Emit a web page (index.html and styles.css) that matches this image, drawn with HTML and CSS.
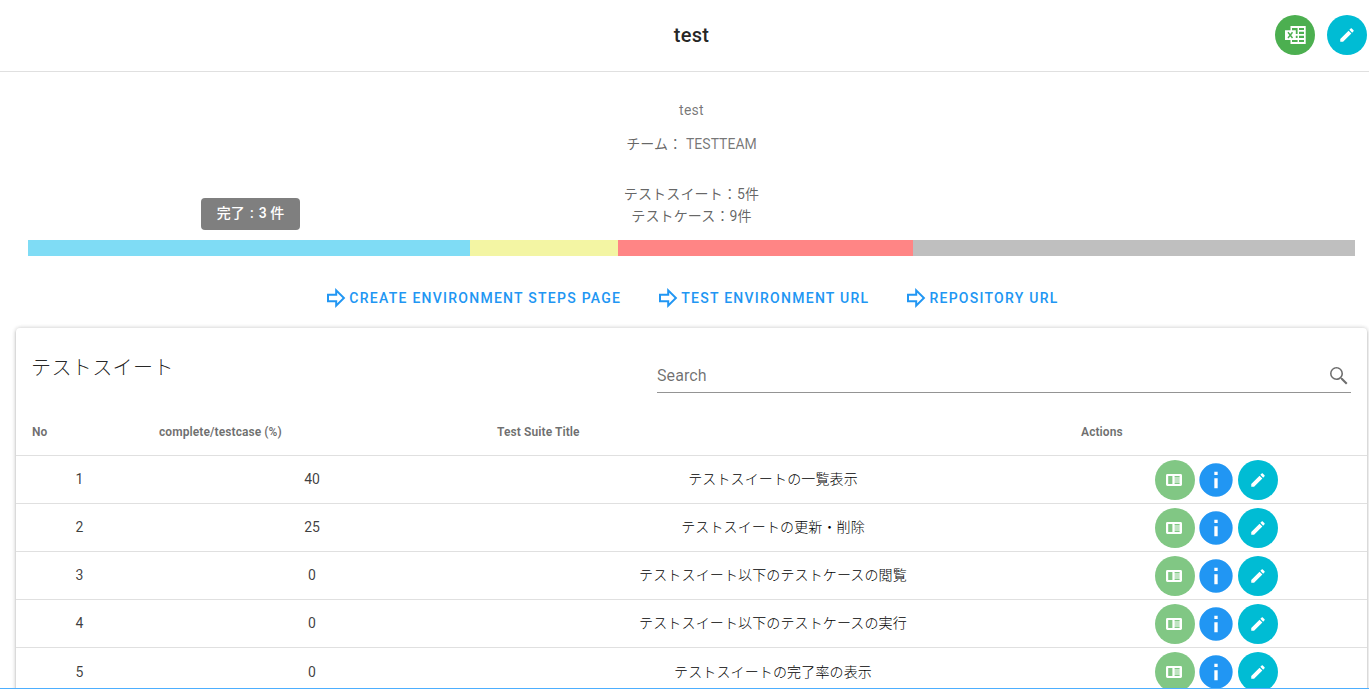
FILE: index.html
```
<!DOCTYPE html>
<html lang="ja">
<head>
<meta charset="utf-8">
<title>test</title>
<link rel="stylesheet" href="styles.css">
</head>
<body>
<svg class="defs" width="0" height="0">
  <symbol id="pencil" viewBox="0 0 24 24"><path d="M20.71,7.04C21.1,6.65 21.1,6 20.71,5.63L18.37,3.29C18,2.9 17.35,2.9 16.96,3.29L15.12,5.12L18.87,8.87M3,17.25V21H6.75L17.81,9.93L14.06,6.18L3,17.25Z"/></symbol>
  <symbol id="info" viewBox="0 0 24 24"><path d="M13,9H11V7H13M13,17H11V11H13M12,2A10,10 0 0,0 2,12A10,10 0 0,0 12,22A10,10 0 0,0 22,12A10,10 0 0,0 12,2Z"/></symbol>
  <symbol id="reader" viewBox="0 0 16 12"><path fill-rule="evenodd" d="M1.4,0H14.6A1.4,1.4 0 0,1 16,1.4V10.6A1.4,1.4 0 0,1 14.6,12H1.4A1.4,1.4 0 0,1 0,10.6V1.4A1.4,1.4 0 0,1 1.4,0ZM2.2,2V10H6.4V2ZM8.6,2V3.6H13.6V2ZM8.6,4.6V5.5H13.6V4.6ZM8.6,6.6V7.5H13.6V6.6ZM8.6,8.5V10H13.6V8.5Z"/></symbol>
  <symbol id="arrow" viewBox="0 0 19 20"><path fill-rule="evenodd" d="M0,5.8H8.2V0L18.3,10L8.2,20V14.2H0ZM2,7.8V12.2H10.2V15.2L15.5,10L10.2,4.8V7.8Z"/></symbol>
</svg>
<div class="page">
  <header class="header">
    <h1 class="header-title">test</h1>
    <div class="header-actions">
      <span class="fab excel"><svg width="21" height="18" viewBox="0 0 21 18"><path fill-rule="evenodd" d="M5.5,0H20.7V18H5.5V14H0V4.3H5.5ZM7,2V4.3H10.8V5.7H12.6V2ZM14,2V4H19V2ZM14,5.7V7.9H19V5.7ZM14,9.8V12H19V9.8ZM14,13.9V16H19V13.9ZM10.8,5.7V7.9H12.6V5.7ZM10.8,9.8V12H12.6V9.8ZM7,14V16H12.6V13.9Z"/><path class="excel-mark" d="M3,6.2L7.5,12M7.5,6.2L3,12"/></svg></span>
      <span class="fab cyan"><svg width="18" height="18"><use href="#pencil"/></svg></span>
    </div>
  </header>
  <main class="content">
    <section class="summary">
      <p class="desc">test</p>
      <p class="team">チーム： <span class="latin">TESTTEAM</span></p>
      <p class="count">テストスイート：5件</p>
      <p class="count">テストケース：9件</p>
    </section>
    <div class="progress">
      <div class="seg done"><div class="tooltip">完了<span class="colon">:</span>3 件</div></div>
      <div class="seg yellow"></div>
      <div class="seg red"></div>
      <div class="seg gray"></div>
    </div>
    <nav class="links">
      <a class="link"><svg width="19" height="20"><use href="#arrow"/></svg>CREATE ENVIRONMENT STEPS PAGE</a>
      <a class="link"><svg width="19" height="20"><use href="#arrow"/></svg>TEST ENVIRONMENT URL</a>
      <a class="link"><svg width="19" height="20"><use href="#arrow"/></svg>REPOSITORY URL</a>
    </nav>
    <section class="card">
      <div class="card-head">
        <h2 class="card-title">テストスイート</h2>
        <div class="search"><span>Search</span><svg width="24" height="24" viewBox="0 0 24 24"><path d="M9.5,3A6.5,6.5 0 0,1 16,9.5C16,11.11 15.41,12.59 14.44,13.73L14.71,14H15.5L20.5,19L19,20.5L14,15.5V14.71L13.73,14.44C12.59,15.41 11.11,16 9.5,16A6.5,6.5 0 0,1 3,9.5A6.5,6.5 0 0,1 9.5,3M9.5,4.6C6.8,4.6 4.6,6.8 4.6,9.5C4.6,12.2 6.8,14.4 9.5,14.4C12.2,14.4 14.4,12.2 14.4,9.5C14.4,6.8 12.2,4.6 9.5,4.6Z"/></svg></div>
      </div>
      <div class="row head"><span>No</span><span>complete/testcase (%)</span><span>Test Suite Title</span><span>Actions</span></div>
      <div class="row"><span class="num">1</span><span class="num">40</span><span class="suite">テストスイートの一覧表示</span><span class="actions"><i class="fab green"><svg width="16" height="12"><use href="#reader"/></svg></i><svg class="info" width="40" height="40"><use href="#info"/></svg><i class="fab cyan"><svg width="18" height="18"><use href="#pencil"/></svg></i></span></div>
      <div class="row"><span class="num">2</span><span class="num">25</span><span class="suite">テストスイートの更新・削除</span><span class="actions"><i class="fab green"><svg width="16" height="12"><use href="#reader"/></svg></i><svg class="info" width="40" height="40"><use href="#info"/></svg><i class="fab cyan"><svg width="18" height="18"><use href="#pencil"/></svg></i></span></div>
      <div class="row"><span class="num">3</span><span class="num">0</span><span class="suite">テストスイート以下のテストケースの閲覧</span><span class="actions"><i class="fab green"><svg width="16" height="12"><use href="#reader"/></svg></i><svg class="info" width="40" height="40"><use href="#info"/></svg><i class="fab cyan"><svg width="18" height="18"><use href="#pencil"/></svg></i></span></div>
      <div class="row"><span class="num">4</span><span class="num">0</span><span class="suite">テストスイート以下のテストケースの実行</span><span class="actions"><i class="fab green"><svg width="16" height="12"><use href="#reader"/></svg></i><svg class="info" width="40" height="40"><use href="#info"/></svg><i class="fab cyan"><svg width="18" height="18"><use href="#pencil"/></svg></i></span></div>
      <div class="row"><span class="num">5</span><span class="num">0</span><span class="suite">テストスイートの完了率の表示</span><span class="actions"><i class="fab green"><svg width="16" height="12"><use href="#reader"/></svg></i><svg class="info" width="40" height="40"><use href="#info"/></svg><i class="fab cyan"><svg width="18" height="18"><use href="#pencil"/></svg></i></span></div>
    </section>
  </main>
</div>
</body>
</html>
```
FILE: styles.css
```
* { box-sizing: border-box; }
body { margin: 0; overflow: hidden; background: #fff; color: rgba(0,0,0,.87); font-family: Roboto, "Noto Sans CJK JP", sans-serif; font-size: 14px; }
h1, h2, p { margin: 0; font-weight: 400; }
svg { display: block; fill: currentColor; flex: none; }
.defs { position: absolute; }
.page { height: 689px; overflow: hidden; border-bottom: 1px solid #4dafff; }
.header { display: grid; grid-template-columns: 1fr auto 1fr; align-items: center; height: 72px; padding: 0 2px 2px 16px; border-bottom: 1px solid #e0e0e0; }
.header-title { grid-column: 2; font-size: 20px; font-weight: 500; letter-spacing: .25px; }
.header-actions { display: flex; justify-content: flex-end; gap: 12px; }
.fab { display: flex; align-items: center; justify-content: center; width: 40px; height: 40px; border-radius: 50%; color: #fff; flex: none; }
.excel { background: #4caf50; }
.excel-mark { fill: none; stroke: #4caf50; stroke-width: 1.4; }
.green { padding-right: 1px; background: #81c784; }
.cyan { background: #00bcd4; }
.content { padding: 27px 2px 0 16px; }
.summary { display: flex; flex-direction: column; align-items: center; height: 141px; color: rgba(0,0,0,.62); line-height: 22px; font-weight: 300; letter-spacing: .15px; }
.desc { color: rgba(0,0,0,.55); font-weight: 400; letter-spacing: .25px; }
.team { margin: 12px 0 28px; }
.latin { color: rgba(0,0,0,.55); font-weight: 400; letter-spacing: 0; }
.progress { display: flex; height: 16px; margin: 0 12px; }
.seg { flex: 3; }
.done { position: relative; background: #7fdcf5; }
.yellow { flex: 1; background: #f3f5a3; }
.red { flex: 2; background: #ff8585; }
.gray { background: #bfbfbf; }
.tooltip { position: absolute; left: 173px; top: -42px; width: 99px; height: 32px; border-radius: 4px; background: #7f7f7f; color: #fff; font-weight: 500; line-height: 31px; text-align: center; white-space: nowrap; }
.colon { display: inline-block; width: 14px; text-align: center; }
.links { display: flex; justify-content: center; gap: 38px; height: 72px; padding: 32px 0 0 3px; color: #2196f3; font-weight: 500; letter-spacing: 1.26px; line-height: 20px; }
.link { display: flex; gap: 3px; white-space: nowrap; }
.card { height: 410px; border-radius: 4px; background: #fff; box-shadow: 0 3px 1px -2px rgba(0,0,0,.2), 0 2px 2px rgba(0,0,0,.14), 0 1px 5px rgba(0,0,0,.12), 0 0 4px rgba(0,0,0,.16); }
.card-head { display: flex; justify-content: space-between; height: 80px; padding: 0 16px 0 15px; }
.card-title { padding-top: 24px; font-size: 20px; font-weight: 300; line-height: 32px; letter-spacing: .4px; }
.search { display: flex; justify-content: space-between; align-items: center; width: 694px; height: 33px; margin-top: 32px; border-bottom: 1px solid #949494; color: rgba(0,0,0,.57); font-size: 16px; letter-spacing: .1px; }
.search span { padding-bottom: 2px; }
.row { display: grid; grid-template-columns: 127px 338px 584px 302px; align-items: center; height: 48px; border-bottom: 1px solid #e0e0e0; text-align: center; }
.row:last-child { border-bottom-color: transparent; }
.head { color: rgba(0,0,0,.57); font-size: 12px; font-weight: 700; letter-spacing: .08px; text-align: left; }
.head span { padding-left: 16px; }
.num { padding-bottom: 2px; color: rgba(0,0,0,.76); }
.suite { padding-bottom: 3px; color: #000; font-weight: 300; letter-spacing: .13px; }
.row:last-child .num, .row:last-child .suite { padding-bottom: 0; }
.row:last-child .suite { padding-bottom: 1px; }
.actions { display: flex; justify-content: center; align-items: center; gap: 1.5px; padding-top: 1px; }
.info { color: #2196f3; }
```
